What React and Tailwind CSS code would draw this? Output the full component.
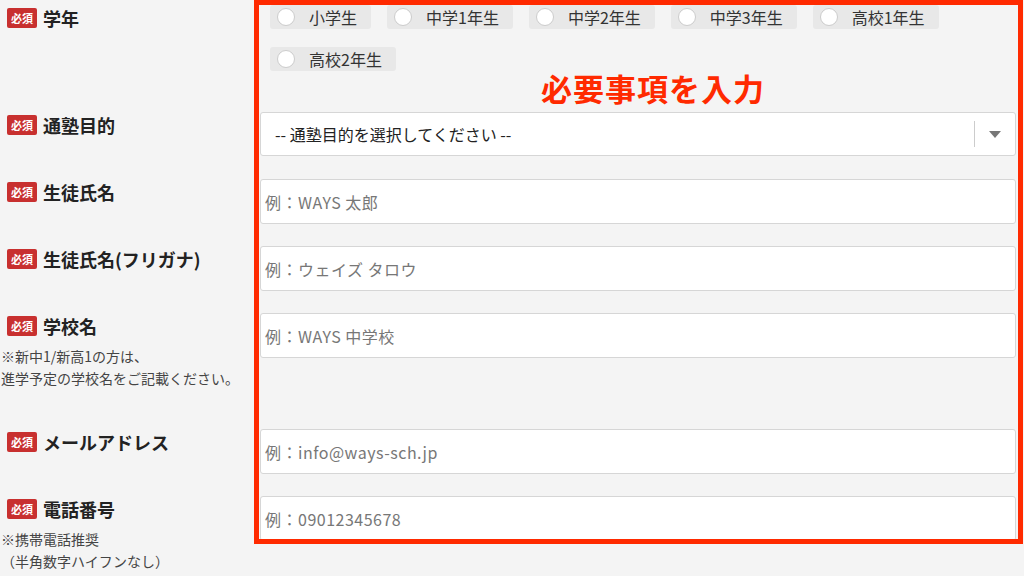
export default function App() {
  const font = { fontFamily: '"Noto Sans CJK JP", "Noto Sans", sans-serif' };
  const Badge = () => (
    <span className="inline-flex items-center justify-center h-[20px] px-[4px] rounded-[2px] bg-[#c8302f] text-white text-[11px] leading-none mr-[6px]">必須</span>
  );
  const Label = ({ t, note }) => (
    <div className="w-[253px] shrink-0 pt-[2px]">
      <div className="flex items-center text-[18px] font-bold text-[#222] leading-[22px]">
        <Badge />
        {t}
      </div>
      {note && <div className="mt-[8px] -ml-[6px] text-[14px] leading-[22px] text-[#444] whitespace-nowrap">{note}</div>}
    </div>
  );
  const Input = ({ ph }) => (
    <div className="h-[45px] bg-white border border-[#d6d6d6] rounded-[3px] flex items-center pl-[4px] text-[16px] text-[#777] tracking-[0.5px]">{ph}</div>
  );
  const Radio = ({ t }) => (
    <div className="flex items-center h-[24px] bg-[#e8e8e8] rounded-[3px] pl-[7px] pr-[14px] text-[16px] text-[#333]">
      <span className="w-[18px] h-[18px] rounded-full bg-white border border-[#ccc] mr-[14px]" />
      {t}
    </div>
  );
  const Row = ({ label, note, mt, children }) => (
    <div className="flex pr-[8px] h-[45px]" style={{ marginTop: mt }}>
      <Label t={label} note={note} />
      <div className="flex-1">{children}</div>
    </div>
  );
  return (
    <div className="relative w-[1024px] h-[576px] overflow-hidden bg-[#f4f4f4]" style={font}>
      <div className="pl-[7px] pt-[5px]">
        <div className="flex pr-[8px] h-[107px]">
          <Label t="学年" />
          <div className="flex-1 pl-[10px]">
            <div className="flex flex-wrap gap-x-[16px] gap-y-[18px] pr-[60px]">
              {["小学生", "中学1年生", "中学2年生", "中学3年生", "高校1年生", "高校2年生"].map((t) => (
                <Radio key={t} t={t} />
              ))}
            </div>
            <div className="text-center text-[#ff2a00] text-[31px] font-bold tracking-[1px] -mt-[6px] pl-[20px]">必要事項を入力</div>
          </div>
        </div>
        <Row label="通塾目的" mt={0}>
          <div className="h-[44px] bg-white border border-[#d6d6d6] rounded-[3px] flex items-center pl-[14px] text-[16px] text-[#222]">
            <span className="flex-1">-- 通塾目的を選択してください --</span>
            <span className="w-px h-[26px] bg-[#ccc]" />
            <span className="w-[40px] flex justify-center">
              <svg width="12" height="7" viewBox="0 0 12 7"><path d="M0 0h12L6 7z" fill="#777" /></svg>
            </span>
          </div>
        </Row>
        <Row label="生徒氏名" mt={22}><Input ph="例：WAYS 太郎" /></Row>
        <Row label="生徒氏名(フリガナ)" mt={22}><Input ph="例：ウェイズ タロウ" /></Row>
        <Row label="学校名" mt={22} note={<>※新中1/新高1の方は、<br />進学予定の学校名をご記載ください。</>}><Input ph="例：WAYS 中学校" /></Row>
        <Row label="メールアドレス" mt={71}><Input ph="例：info@ways-sch.jp" /></Row>
        <Row label="電話番号" mt={22} note={<>※携帯電話推奨<br />（半角数字ハイフンなし）</>}><Input ph="例：09012345678" /></Row>
      </div>
      <div className="absolute left-[254px] top-0 w-[769px] h-[544px] border-[5px] border-[#ff2a00] pointer-events-none" />
    </div>
  );
}
